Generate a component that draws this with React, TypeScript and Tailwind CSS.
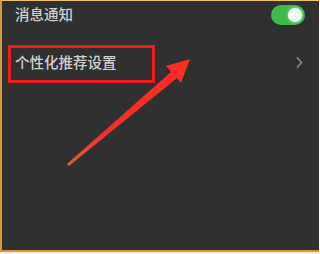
import React from "react";

export default function App() {
  return (
    <div className="w-[319px] h-[254px] bg-[#303030] overflow-hidden flex flex-col" style={{ fontFamily: '"Noto Sans CJK SC", "Noto Sans", sans-serif' }}>
      <div className="relative w-full h-[252px] shrink-0 bg-[#303030] border-t border-t-[#e9c35c] border-l-2 border-l-[#d9993e] border-b-2 border-b-[#d9943a]">
        <div className="flex flex-col">
          <div className="h-[27px] flex items-center justify-between pl-[13px] pr-[14px]">
            <span className="text-[14.5px] leading-none font-medium text-[#d0d0d0]">消息通知</span>
            <div className="w-[34px] h-[20px] rounded-full bg-[#3dbb4a] flex items-center justify-end pr-[3px]">
              <div className="w-[14px] h-[14px] rounded-full bg-[#f2fff2] shadow-[0_0_3px_rgba(255,255,255,0.7)]" />
            </div>
          </div>
          <div className="mt-[12px] h-[44px] flex items-center justify-between pl-[13px] pr-[16px]">
            <span className="text-[14.5px] leading-none font-medium text-[#d0d0d0]">个性化推荐设置</span>
            <svg width="7" height="11" viewBox="0 0 7 11" className="block">
              <path d="M1.5 1 L5.5 5.5 L1.5 10" fill="none" stroke="#858585" strokeWidth="1.8" strokeLinecap="round" strokeLinejoin="round" />
            </svg>
          </div>
        </div>
        <div className="absolute left-[6px] top-[44px] w-[147px] h-[38px] border-[3px] border-[#ee1c1c]" />
        <svg className="absolute left-[-2px] top-[-1px]" width="317" height="252" viewBox="0 0 317 252">
          <defs>
            <linearGradient id="ag" x1="68" y1="165" x2="190" y2="59" gradientUnits="userSpaceOnUse">
              <stop offset="0" stopColor="#d9603e" />
              <stop offset="0.3" stopColor="#f0302a" />
              <stop offset="1" stopColor="#ff2a22" />
            </linearGradient>
          </defs>
          <path d="M67 164 L171 72 L166 66 L190 59 L181 83 L177 78 L69 166 Z" fill="url(#ag)" />
        </svg>
      </div>
      <div className="h-[2px] shrink-0 bg-[#f6ecd8]" />
    </div>
  );
}
